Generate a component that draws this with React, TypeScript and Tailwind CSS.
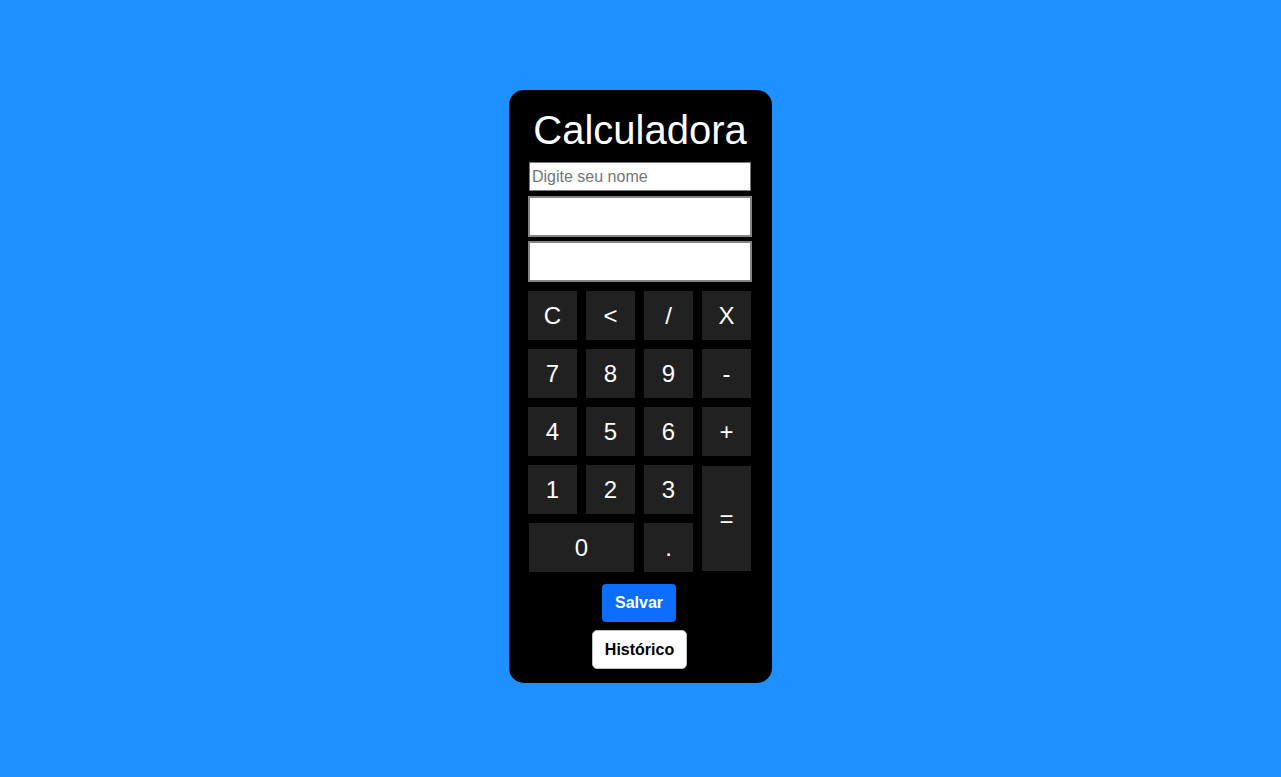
import { useState } from "react";

const keys: { label: string; className?: string }[] = [
  { label: "C" },
  { label: "<" },
  { label: "/" },
  { label: "X" },
  { label: "7" },
  { label: "8" },
  { label: "9" },
  { label: "-" },
  { label: "4" },
  { label: "5" },
  { label: "6" },
  { label: "+" },
  { label: "1" },
  { label: "2" },
  { label: "3" },
  { label: "=", className: "row-span-2 my-[1px]" },
  { label: "0", className: "col-span-2 mx-[1px]" },
  { label: "." },
];

export default function App() {
  const [nome, setNome] = useState("");

  return (
    <div
      className="min-h-screen w-full bg-[#1e90ff] flex justify-center pt-[90px]"
      style={{ fontFamily: '"Liberation Sans", Arial, sans-serif' }}
    >
      {/* Card */}
      <div className="w-[263px] h-[593px] bg-black rounded-[15px] pl-[19px] pr-[20px] pt-[17px] flex flex-col items-center">
        <h1 className="text-[40px] leading-[46px] text-white">Calculadora</h1>

        <input
          value={nome}
          onChange={(e) => setNome(e.target.value)}
          placeholder="Digite seu nome"
          className="mt-[9px] w-[222px] h-[29px] bg-white border border-[#767676] px-[2px] text-[16px] text-black placeholder:text-[#757575] outline-none"
        />
        <input readOnly className="mt-[5px] w-[224px] h-[41px] bg-white border-2 border-[#858585] outline-none" />
        <input readOnly className="mt-[4px] w-[224px] h-[41px] bg-white border-2 border-[#858585] outline-none" />

        {/* Keypad */}
        <div className="self-start mt-[9px] grid grid-cols-[49px_49px_49px_49px] auto-rows-[49px] gap-[9px]">
          {keys.map((k) => (
            <button
              key={k.label}
              className={`bg-[#212121] text-white text-[24px] flex items-center justify-center ${k.className ?? ""}`}
            >
              {k.label}
            </button>
          ))}
        </div>

        <button className="mt-[12px] mr-[2px] h-[38px] px-[13px] bg-[#0d6efd] text-white text-[16px] font-bold rounded-[4px]">
          Salvar
        </button>
        <button className="mt-[8px] mr-[1px] h-[39px] px-[12px] bg-white text-black text-[16px] font-bold rounded-[5px] border border-[#bdbdbd]">
          Histórico
        </button>
      </div>
    </div>
  );
}
